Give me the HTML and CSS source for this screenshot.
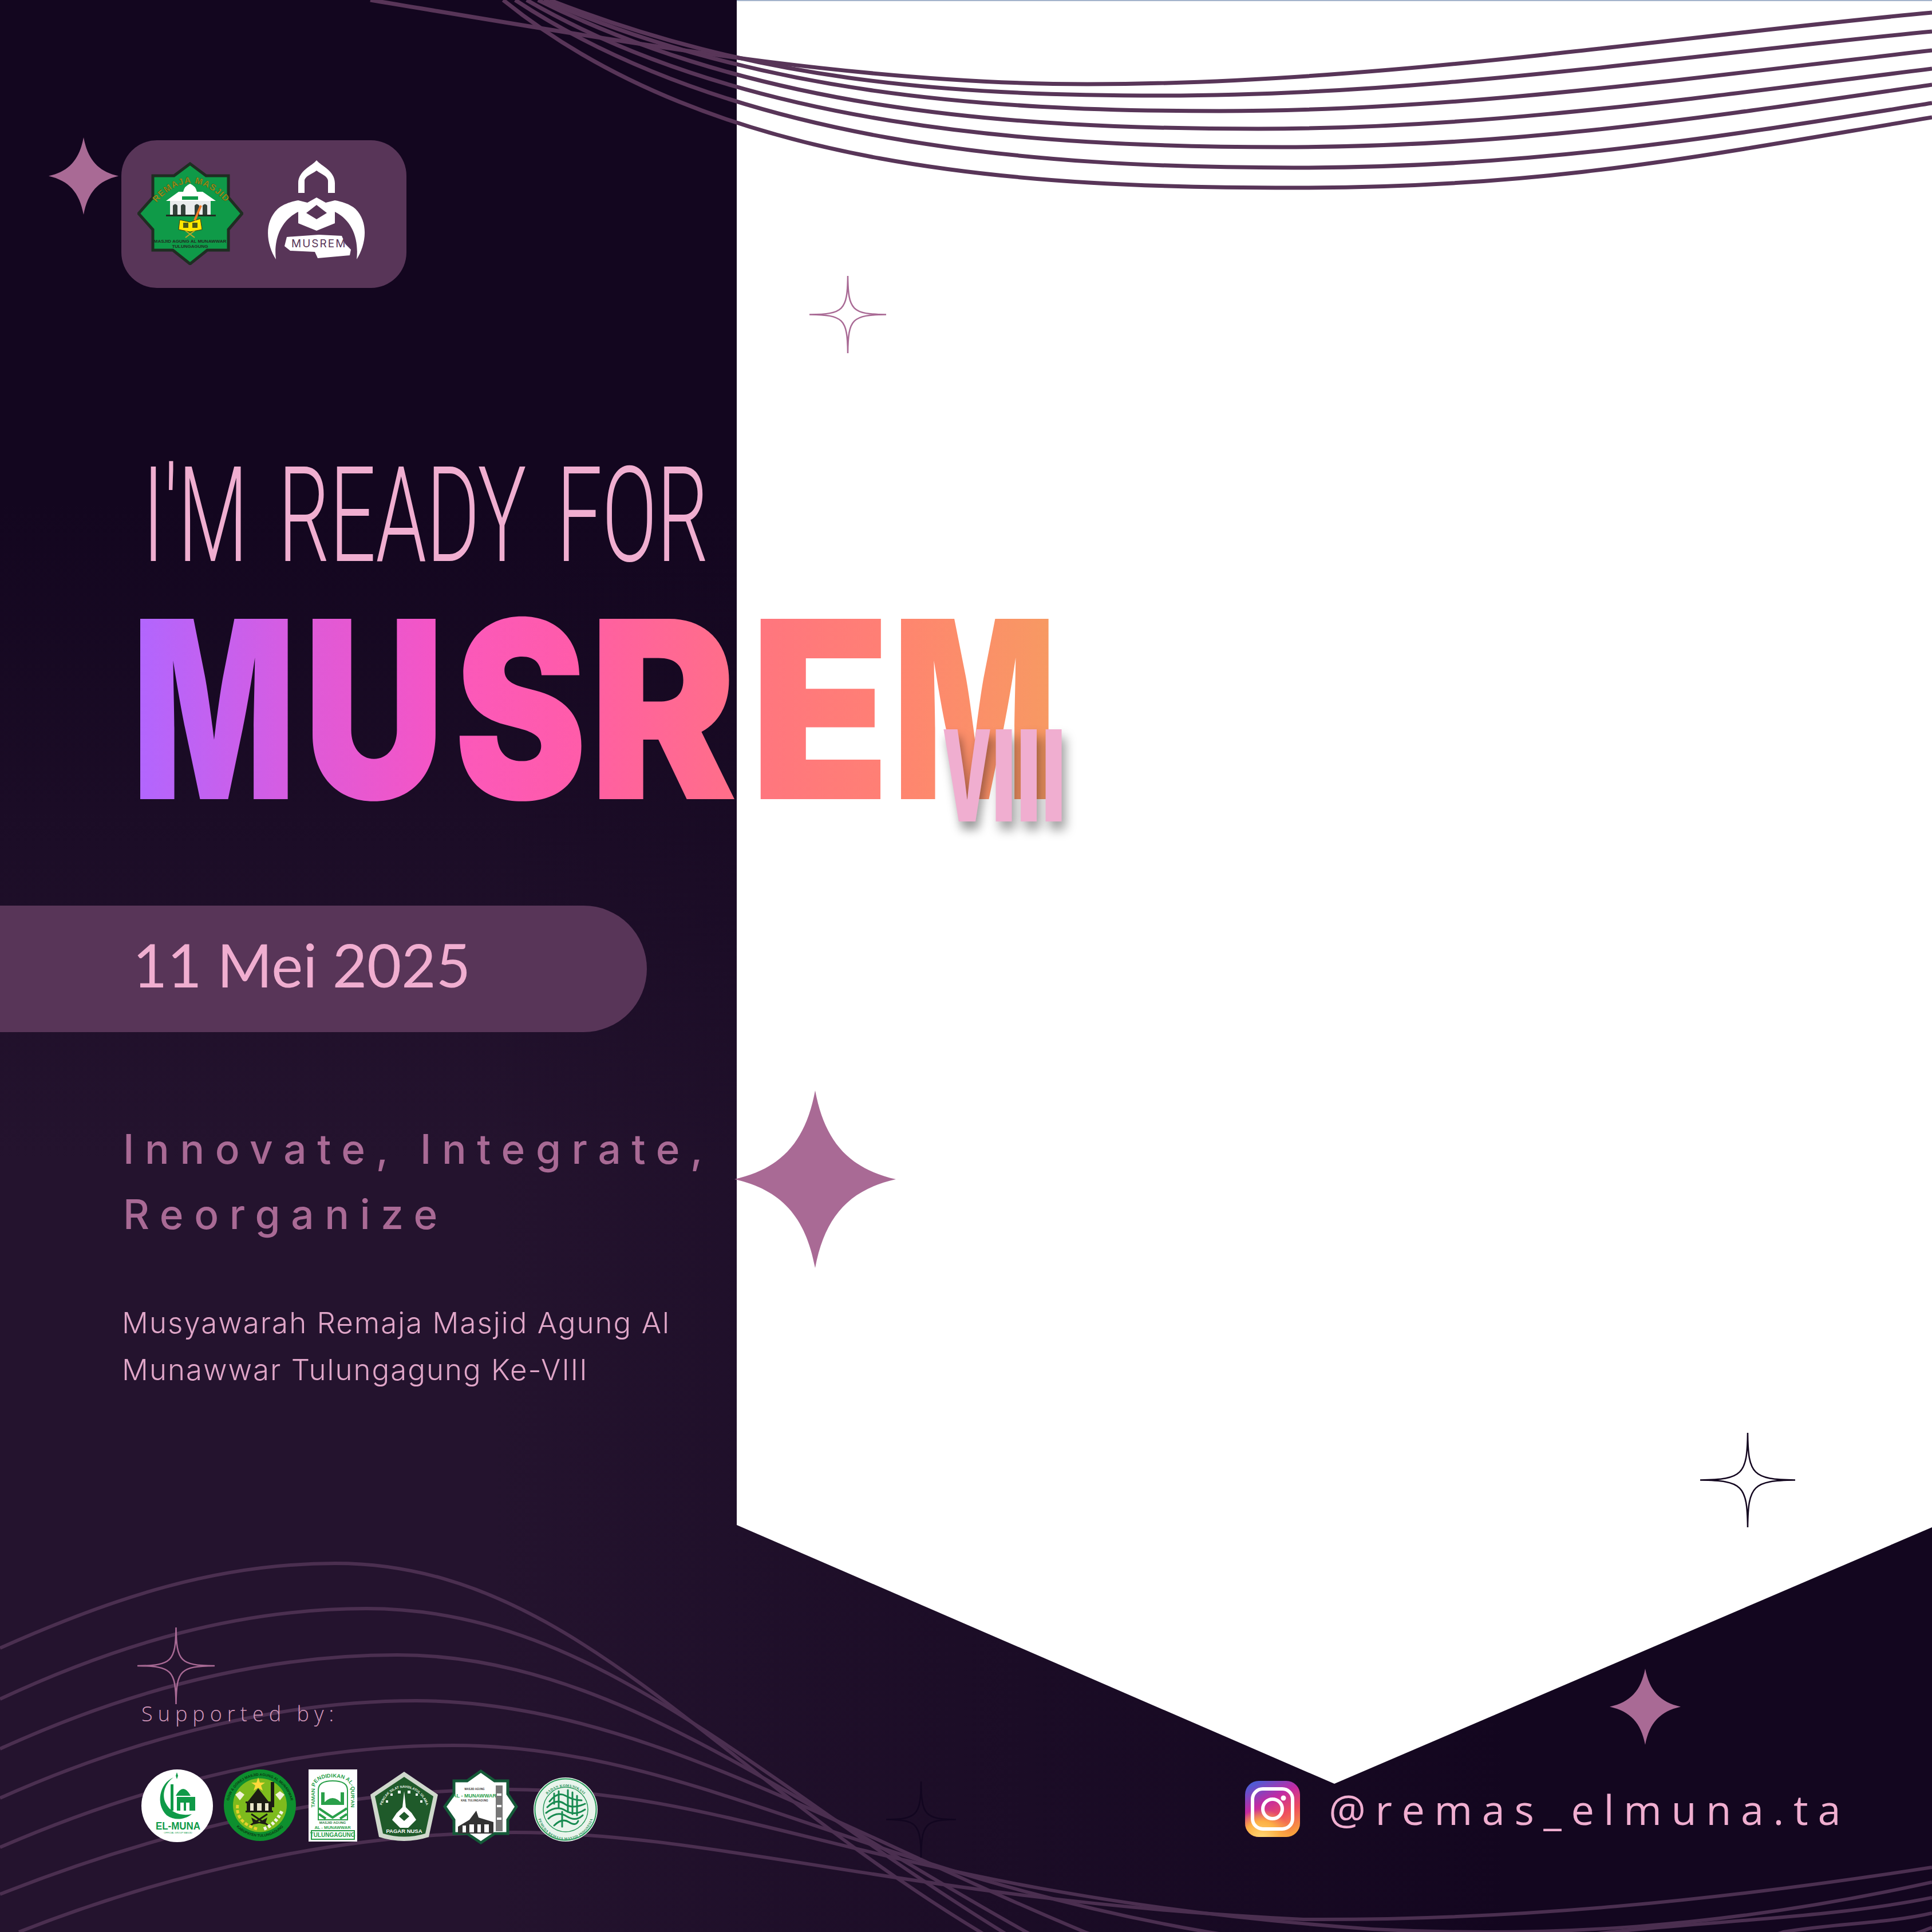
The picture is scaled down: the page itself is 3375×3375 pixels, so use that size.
FILE: index.html
```html
<!DOCTYPE html>
<html lang="id">
<head>
<meta charset="utf-8">
<title>MUSREM VIII</title>
<link rel="stylesheet" href="styles.css">
</head>
<body>
<main class="poster">
  <svg class="defs" aria-hidden="true">
    <symbol id="star-solid" viewBox="-100 -100 200 200" preserveAspectRatio="none">
      <path d="M0-100C12-42 42-12 100 0 42 12 12 42 0 100-12 42-42 12-100 0-42-12-12-42 0-100Z"/>
    </symbol>
    <symbol id="star-line" viewBox="-100 -100 200 200" preserveAspectRatio="none">
      <path vector-effect="non-scaling-stroke" d="M0-100C1-11 11-1 100 0 11 1 1 11 0 100-1 11-11 1-100 0-11-1-1-11 0-100Z"/>
    </symbol>
    <linearGradient id="ig-a" x1="0.75" y1="1" x2="0.25" y2="0">
      <stop offset="0" stop-color="#f9a03c"/><stop offset="0.35" stop-color="#ee4d5f"/>
      <stop offset="0.65" stop-color="#c32aa3"/><stop offset="1" stop-color="#4f5bd5"/>
    </linearGradient>
    <radialGradient id="ig-b" cx="0.3" cy="1.05" r="0.55">
      <stop offset="0" stop-color="#ffdd7a"/><stop offset="0.6" stop-color="#fcaf45"/><stop offset="1" stop-color="#fcaf45" stop-opacity="0"/>
    </radialGradient>
  </svg>

  <div class="panel"></div>

  <svg class="curves" viewBox="0 0 3375 3375" aria-hidden="true">
    <g class="curves-top">
      <path d="M647 0C1100 75 1500 147 1900 147 2400 147 2900 66 3375 22"/>
      <path d="M960 0C1320 140 1640 167 2029 167 2500 167 2950 95 3375 55"/>
      <path d="M950 0C1320 160 1700 194 2130 194 2550 194 2960 135 3375 88"/>
      <path d="M940 0C1320 190 1750 225 2198 225 2600 225 2970 170 3375 120"/>
      <path d="M920 0C1300 220 1800 257 2239 257 2650 257 2980 205 3375 148"/>
      <path d="M900 0C1280 250 1800 293 2260 293 2680 293 3000 240 3375 180"/>
      <path d="M879 0C1250 300 1800 328 2260 328 2700 328 2950 276 3375 205"/>
    </g>
    <g class="curves-bottom">
      <path d="M0 2879C200 2790 380 2731 586 2731 1000 2731 1250 3100 1721 3380"/>
      <path d="M0 2968C210 2870 420 2810 640 2810 1040 2810 1320 3110 1760 3380"/>
      <path d="M0 3055C230 2950 460 2891 694 2891 1060 2891 1370 3140 1793 3375 2200 3600 3000 3500 3310 3390 3335 3382 3355 3375 3375 3367"/>
      <path d="M0 3141C250 3030 500 2971 727 2971 1100 2971 1450 3190 1895 3375 2200 3480 2800 3480 3115 3375 3200 3360 3300 3360 3375 3342"/>
      <path d="M0 3227C270 3110 540 3049 792 3049 1200 3049 1500 3270 2110 3375 2400 3420 2600 3400 2815 3375 3000 3355 3200 3350 3375 3315"/>
      <path d="M0 3309C300 3190 600 3126 889 3126 1300 3126 1550 3310 2397 3370 2700 3385 3000 3370 3375 3288"/>
      <path d="M33 3375C300 3270 600 3201 900 3201 1250 3201 1600 3320 2277 3353 2650 3355 3000 3320 3375 3262"/>
    </g>
  </svg>

  <svg class="star star-solid s-logo"><use href="#star-solid"/></svg>
  <svg class="star star-solid s-big"><use href="#star-solid"/></svg>
  <svg class="star star-solid s-br"><use href="#star-solid"/></svg>
  <svg class="star star-line s-top"><use href="#star-line"/></svg>
  <svg class="star star-line s-black"><use href="#star-line"/></svg>
  <svg class="star star-line s-left"><use href="#star-line"/></svg>
  <svg class="star star-line s-faint"><use href="#star-line"/></svg>

  <div class="content">
    <header class="brand">
      <svg class="brand-star" viewBox="0 0 185 180">
        <path class="octa" d="M92 3 120 24H159V62L183 90 159 118V154H122L92 178 62 154H27V118L2 90 27 62V24H64Z"/>
        <path id="remaja-arc" fill="none" d="M36 68Q93 6 152 68"/>
        <text class="octa-arc"><textPath href="#remaja-arc" startOffset="50%" text-anchor="middle">REMAJA MASJID</textPath></text>
        <path fill="#fff" d="M50 68 72 52H80Q82 42 92 38 102 42 104 52H114L137 68Z"/>
        <path fill="#0f9a48" d="M78 60H106V66H78Z"/>
        <path fill="#e9ecec" d="M57 68H128V92H57Z"/>
        <path fill="#33413a" d="M62 92V76Q66 71 70 76V92ZM76 92V76Q80 71 84 76V92ZM100 92V76Q104 71 108 76V92ZM114 92V76Q118 71 122 76V92Z"/>
        <path fill="#1f2d22" d="M50 92H137V95H50Z"/>
        <path fill="#ffe800" stroke="#3b3b10" stroke-width="1" d="M74 101 92 105 110 99 113 118 92 122 72 118Z"/>
        <path fill="#4b5a18" d="M80 106H89V115H80ZM96 106H105V115H96Z"/>
        <path stroke="#f27a25" stroke-width="4" d="M111 76 100 102"/>
        <path stroke="#c2a727" stroke-width="2" d="M84 120 100 132M100 120 84 132"/>
        <text class="octa-small" x="92" y="141">MASJID AGUNG AL MUNAWWAR</text>
        <text class="octa-small" x="92" y="150">TULUNGAGUNG</text>
      </svg>
      <svg class="brand-musrem" viewBox="0 0 175 173">
        <path fill="#fff" d="M88 0C80 10 56 18 56 40V57H67V36C67 28 80 24 88 18 96 24 108 28 108 36V57H120V40C120 18 96 10 88 0Z"/>
        <path fill="#fff" fill-rule="evenodd" d="M17 173C2 150-6 110 20 85 30 76 45 72 56 70L72 74 88 65 104 74 120 70C131 72 146 76 156 85 181 110 173 150 158 173 162 140 152 106 120 90V110L88 123 56 110V90C24 106 13 140 17 173ZM88 78 70 92 88 103 106 92Z"/>
        <path fill="#fff" d="M36 134 92 130 132 132 138 146 148 156 146 166 90 171 85 160 42 158 32 150Z"/>
        <text class="musrem-mark" x="44" y="152">MUSREM</text>
      </svg>
    </header>

    <h2 class="ready">I'M READY FOR</h2>

    <h1 class="title">
      <span class="word">
        <span class="slot slot-m1"><span class="glyph">M</span></span>
        <span class="slot slot-u"><span class="glyph">U</span></span>
        <span class="slot slot-s"><span class="glyph">S</span></span>
        <span class="slot slot-r"><span class="glyph">R</span></span>
        <span class="slot slot-e"><span class="glyph">E</span></span>
        <span class="slot slot-m2"><span class="glyph">M</span></span>
      </span>
      <span class="edition"><span class="ed-v"><span class="ed-v-glyph">V</span></span><span class="ed-i">III</span></span>
    </h1>

    <div class="date"><span class="date-text">11 Mei 2025</span></div>

    <p class="tagline">Innovate, Integrate,<br>Reorganize</p>

    <p class="about">Musyawarah Remaja Masjid Agung Al<br>Munawwar Tulungagung Ke-VIII</p>

    <footer class="footer">
      <div class="support">
        <p class="support-label">Supported by:</p>
        <div class="emblems">
          <svg class="emblem e1" viewBox="0 0 125 127">
            <ellipse cx="62.5" cy="63.5" rx="62.5" ry="63.5" fill="#fff"/>
            <path fill="#0f9a48" d="M56 14C32 24 24 60 44 80 58 90 76 88 88 78 70 82 50 76 42 58 35 42 42 24 56 14Z"/>
            <path fill="#0f9a48" d="M62 5 64 11 62 17 60 11Z"/>
            <path fill="#0f9a48" d="M60 46Q73 22 86 46ZM51 26H56V72H51ZM62 48H94V72H62Z"/>
            <path fill="#fff" d="M68 58H74V72H68ZM78 58H84V72H78Z"/>
            <text class="e-muna" x="64" y="105" textLength="78" lengthAdjust="spacingAndGlyphs">EL-MUNA</text>
            <text class="e-muna-s" x="64" y="112">OFFICIAL GROUP MASJID</text>
          </svg>
          <svg class="emblem e2" viewBox="0 0 126 125">
            <ellipse cx="63" cy="62.5" rx="63" ry="62.5" fill="#0d8f2e"/>
            <ellipse cx="63" cy="62.5" rx="47" ry="47" fill="#7dbb1d"/>
            <path id="e2-top" fill="none" d="M8 66A55 55 0 0 1 118 66"/>
            <path id="e2-bot" fill="none" d="M11 84A57 57 0 0 0 115 84"/>
            <text class="e2-ring"><textPath href="#e2-top" startOffset="50%" text-anchor="middle">GOW &amp; GOREJ MASJID AGUNG AL MUNAWWAR</textPath></text>
            <text class="e2-ring"><textPath href="#e2-bot" startOffset="50%" text-anchor="middle">KABUPATEN TULUNGAGUNG</textPath></text>
            <path fill="#ffd93b" d="M60 14 63 23 72 23 65 28 68 37 60 32 52 37 55 28 48 23 57 23Z"/>
            <path fill="#1c1c14" d="M60 33 78 56H42Z"/>
            <path fill="#e8e4c8" d="M40 56H84V72H40Z"/>
            <path fill="#1c1c14" d="M38 56H86V59H38ZM40 59H46V73H40ZM52 59H58V73H52ZM66 59H72V73H66ZM78 59H84V73H78ZM38 72H86V75H38Z"/>
            <path fill="#1c1c14" d="M82 22H88V66H82Z"/>
            <path fill="#1c1c14" d="M48 84 62 92 76 84 72 96 62 94 52 96Z"/>
            <path stroke="#1c1c14" stroke-width="3" d="M46 98 76 78M78 98 48 78"/>
            <path fill="none" stroke="#e8d12c" stroke-width="5" stroke-dasharray="6 3" d="M24 62Q20 92 58 104"/>
            <path fill="none" stroke="#f4f4e4" stroke-width="6" stroke-dasharray="5 3" d="M70 104Q90 96 102 72"/>
            <path fill="#f3f3d8" d="M20 44 28 38 36 44 28 54ZM90 44 98 38 106 44 98 54Z"/>
          </svg>
          <svg class="emblem e3" viewBox="0 0 85 126">
            <rect width="85" height="126" fill="#fff"/>
            <path id="e3-arch" fill="none" d="M11 88V34Q11 14 42 14 74 14 74 34V88"/>
            <text class="e3-ring"><textPath href="#e3-arch" startOffset="50%" text-anchor="middle">TAMAN PENDIDIKAN AL-QUR'AN</textPath></text>
            <path fill="none" stroke="#2aa04a" stroke-width="2" d="M17 88V36Q17 20 42 20 68 20 68 36V88Z"/>
            <path fill="#2aa04a" d="M24 62Q42 38 60 62ZM22 40H28V62H22ZM56 40H62V62H56Z"/>
            <path fill="none" stroke="#2aa04a" stroke-width="4" d="M18 68 42 84 67 68M18 78 30 86M67 78 55 86"/>
            <text class="e3-s" x="42" y="95">MASJID AGUNG</text>
            <text class="e3-m" x="42" y="104">AL - MUNAWWAR</text>
            <rect x="5" y="107" width="75" height="15" fill="#fff" stroke="#2aa04a" stroke-width="2"/>
            <text class="e3-b" x="42" y="118">TULUNGAGUNG</text>
          </svg>
          <svg class="emblem e4" viewBox="0 0 118 122">
            <path fill="#cfd8cc" d="M59 0 118 40 102 114Q59 128 15 114L0 40Z"/>
            <path fill="#1f5a2a" d="M59 9 110 43 96 108Q59 119 22 108L8 43Z"/>
            <path id="e4-arc" fill="none" d="M18 74A41 46 0 0 1 100 74"/>
            <text class="e4-ring"><textPath href="#e4-arc" startOffset="50%" text-anchor="middle">PENCAK SILAT NAHDLATUL ULAMA</textPath></text>
            <path fill="#fff" d="M59 34 62 62 72 72 80 84 66 98H52L38 84 46 72 56 62Z"/>
            <path fill="#1f5a2a" d="M50 78 59 70 68 78 59 86Z"/>
            <path fill="#fff" d="M35 38h4v4h-4zM48 33h5v5h-5zM65 33h5v5h-5zM79 38h4v4h-4zM27 50h4v4h-4zM87 50h4v4h-4z"/>
            <text class="e4-t" x="59" y="107">PAGAR NUSA</text>
          </svg>
          <svg class="emblem e5" viewBox="0 0 131 131">
            <path fill="#fff" stroke="#145a38" stroke-width="5" d="M66 3 90 20H113V43L128 65 113 88V112H90L66 128 42 112H19V88L3 65 19 43V20H42Z"/>
            <text class="e5-s" x="55" y="36">MASJID AGUNG</text>
            <text class="e5-t" x="55" y="49">AL - MUNAWWAR</text>
            <text class="e5-s" x="55" y="56">KAB. TULUNGAGUNG</text>
            <path fill="#333" d="M58 72 62 84 88 92 88 112H26V100L46 88Z"/>
            <path fill="#fff" d="M34 98H40V110H34ZM46 96H54V110H46ZM60 96H66V110H60ZM72 96H80V110H72Z"/>
            <path fill="#777" d="M92 28H104V108H92Z"/>
            <path fill="#fff" d="M94 42H102V46H94ZM94 62H102V66H94ZM94 84H102V88H94Z"/>
          </svg>
          <svg class="emblem e6" viewBox="0 0 112 112">
            <circle cx="56" cy="56" r="56" fill="#e9f4ec"/>
            <circle cx="56" cy="56" r="53.5" fill="none" stroke="#2a9a5c" stroke-width="2"/>
            <circle cx="56" cy="56" r="39" fill="none" stroke="#2a9a5c" stroke-width="1.5"/>
            <path id="e6-top" fill="none" d="M12 60A44 44 0 0 1 100 60"/>
            <path id="e6-bot" fill="none" d="M7 60A49 49 0 0 0 105 60"/>
            <text class="e6-ring"><textPath href="#e6-top" startOffset="50%" text-anchor="middle">BADAN KOMUNIKASI</textPath></text>
            <text class="e6-ring"><textPath href="#e6-bot" startOffset="50%" text-anchor="middle">PEMUDA REMAJA MASJID INDONESIA</textPath></text>
            <g fill="none" stroke="#178a50" stroke-width="3" stroke-linecap="round">
              <path d="M28 42Q42 24 56 32T84 40"/>
              <path d="M24 52Q40 36 54 46T90 46"/>
              <path d="M22 62Q40 48 56 58T90 56"/>
              <path d="M26 72Q42 58 58 68T86 66"/>
              <path d="M36 84Q50 70 62 78T78 76"/>
              <path d="M36 28V46M44 24V52M60 22V60M68 26V64M76 32V66M50 60V86"/>
            </g>
          </svg>
        </div>
      </div>
      <div class="social">
        <svg class="ig" viewBox="0 0 96 98">
          <rect width="96" height="98" rx="24" fill="url(#ig-a)"/>
          <rect width="96" height="98" rx="24" fill="url(#ig-b)"/>
          <rect x="13" y="14" width="70" height="70" rx="18" fill="none" stroke="#fff" stroke-width="6"/>
          <circle cx="48" cy="49" r="17" fill="none" stroke="#fff" stroke-width="6"/>
          <circle cx="67" cy="30" r="4.5" fill="#fff"/>
        </svg>
        <span class="handle">@remas_elmuna.ta</span>
      </div>
    </footer>
  </div>
</main>
</body>
</html>
```
FILE: styles.css
```css
* { box-sizing: border-box; }
html, body { margin: 0; padding: 0; }
body { width: 3375px; height: 3375px; overflow: hidden; }

.poster {
  position: relative;
  width: 3375px;
  height: 3375px;
  overflow: hidden;
  background:
    linear-gradient(90deg, rgba(19, 6, 31, 0) 25%, #13061f 78%),
    linear-gradient(180deg, #13061f 26%, #24132e 60%);
  font-family: "Inter", "Liberation Sans", sans-serif;
}

.defs { position: absolute; width: 0; height: 0; }

.panel {
  position: absolute;
  left: 1287px;
  top: 0;
  width: 2088px;
  height: 3116px;
  background: #fff;
  border-top: 2px solid #a4b4cc;
  clip-path: polygon(0 0, 100% 0, 100% 2668px, 1044px 100%, 0 2664px);
}

.curves { position: absolute; inset: 0; width: 3375px; height: 3375px; }
.curves path { fill: none; }
.curves-top path { stroke: #583558; stroke-width: 7; }
.curves-bottom path { stroke: #4b2f50; stroke-width: 6; }

.star { position: absolute; }
.star-solid { fill: #a96a95; }
.star-line { fill: none; stroke: #a96a95; stroke-width: 2.5; }
.s-logo { left: 85px; top: 240px; width: 122px; height: 135px; }
.s-big { left: 1283px; top: 1905px; width: 282px; height: 310px; }
.s-br { left: 2812px; top: 2915px; width: 124px; height: 133px; }
.s-top { left: 1414px; top: 482px; width: 134px; height: 135px; }
.s-black { left: 2970px; top: 2503px; width: 166px; height: 165px; stroke: #13061f; }
.s-left { left: 240px; top: 2843px; width: 135px; height: 134px; }
.s-faint { left: 1548px; top: 3112px; width: 122px; height: 133px; stroke: #120620; }

.content {
  position: relative;
  display: flex;
  flex-direction: column;
  height: 3375px;
  padding-top: 245px;
}

.brand {
  display: flex;
  align-items: flex-start;
  width: 498px;
  height: 258px;
  margin-left: 212px;
  padding: 35px 0 0 28px;
  border-radius: 62px;
  background: #583558;
}
.brand-star { width: 185px; height: 180px; margin-top: 3px; flex: none; }
.brand-musrem { width: 175px; height: 173px; margin-left: 40px; flex: none; }
.octa { fill: #0f9a48; stroke: #1f2d22; stroke-width: 5; }
.octa-arc { font: 700 15.5px "Liberation Sans", sans-serif; fill: #a69a1c; stroke: #3b3b10; stroke-width: 0.4; letter-spacing: 1.2px; }
.octa-small { font: 700 8px "Liberation Sans", sans-serif; fill: #1f2d22; text-anchor: middle; }
.musrem-mark { font: 400 19px "Inter", sans-serif; fill: #583558; letter-spacing: 2px; }

.ready {
  margin: 298px 0 0 249px;
  height: 200px;
  font: 300 232px/200px "Roboto", sans-serif;
  word-spacing: 30px;
  color: #f0aed0;
  white-space: nowrap;
  transform: scaleX(0.61);
  transform-origin: left center;
}

.title {
  position: relative;
  height: 347px;
  margin: 68px 0 0 231px;
  font: 900 433px/340px "Inter", sans-serif;
}
.word { display: flex; height: 340px; }
.slot { display: block; flex: none; height: 340px; }
.glyph {
  display: inline-block;
  transform: scaleX(var(--sx));
  transform-origin: left center;
  background: linear-gradient(90deg, var(--c1), var(--c2));
  -webkit-background-clip: text;
  background-clip: text;
  color: transparent;
}
.slot-m1 { width: 299px; --sx: 0.69; --c1: #b066ff; --c2: #d85ce0; }
.slot-u  { width: 263px; --sx: 0.79; --c1: #de5ad8; --c2: #f655c4; }
.slot-s  { width: 236px; --sx: 0.806; --c1: #fb58bb; --c2: #ff5ca8; }
.slot-r  { width: 281px; --sx: 0.895; --c1: #ff5fa2; --c2: #ff6f88; }
.slot-e  { width: 250px; --sx: 0.925; --c1: #ff757f; --c2: #ff8074; }
.slot-m2 { width: 290px; --sx: 0.69; --c1: #ff8470; --c2: #f79a62; }

.edition {
  position: absolute;
  left: 1415px;
  top: 175px;
  display: flex;
  font: 900 221px/221px "Inter", sans-serif;
  color: #f0aed0;
  text-shadow: 10px 14px 24px rgba(0, 0, 0, 0.4);
}
.ed-v { display: block; flex: none; width: 87px; }
.ed-v-glyph { display: inline-block; transform: scaleX(0.49); transform-origin: left center; }
.ed-i { display: block; flex: none; letter-spacing: 3.6px; transform: scaleX(0.64); transform-origin: left center; }

.date {
  display: flex;
  align-items: center;
  width: 1130px;
  height: 221px;
  margin-top: 166px;
  padding: 0 0 16px 232px;
  border-radius: 0 111px 111px 0;
  background: #583558;
}
.date-text { font: 400 104px/1 "Lato", sans-serif; color: #f0aed0; }

.tagline {
  margin: 147px 0 0 215px;
  font-weight: 500;
  font-size: 71px;
  line-height: 114px;
  letter-spacing: 18.7px;
  color: #a96a95;
  white-space: nowrap;
}

.about {
  margin: 92px 0 0 213px;
  font-weight: 300;
  font-size: 51px;
  line-height: 82px;
  letter-spacing: 2px;
  color: #e0a6c8;
  white-space: nowrap;
}

.footer {
  display: flex;
  justify-content: space-between;
  align-items: flex-end;
  margin-top: 535px;
  padding: 0 143px 0 247px;
}
.support-label {
  margin: 0;
  font: 300 36px/50px "Open Sans", sans-serif;
  letter-spacing: 9px;
  color: #d59abd;
}
.emblems { display: flex; align-items: flex-start; margin-top: 72px; }
.emblem { flex: none; display: block; }
.e1 { width: 125px; height: 127px; }
.e2 { width: 126px; height: 125px; margin-left: 19px; }
.e3 { width: 85px; height: 126px; margin-left: 22px; }
.e4 { width: 118px; height: 122px; margin-left: 23px; margin-top: 4px; }
.e5 { width: 131px; height: 131px; margin-left: 9px; }
.e6 { width: 112px; height: 112px; margin-left: 27px; margin-top: 14px; }

.e-muna { font: 700 19px "Liberation Sans", sans-serif; fill: #0f9a48; text-anchor: middle; }
.e-muna-s { font: 400 4px "Liberation Sans", sans-serif; fill: #0f9a48; text-anchor: middle; }
.e2-ring { font: 700 6.4px "Liberation Sans", sans-serif; fill: #0a3a14; }
.e3-ring { font: 700 9.4px "Liberation Sans", sans-serif; fill: #2aa04a; }
.e3-s { font: 700 6px "Liberation Sans", sans-serif; fill: #1f7a3a; text-anchor: middle; }
.e3-m { font: 700 7.5px "Liberation Sans", sans-serif; fill: #2aa04a; text-anchor: middle; }
.e3-b { font: 700 10px "Liberation Sans", sans-serif; fill: #2aa04a; text-anchor: middle; }
.e4-ring { font: 700 6px "Liberation Sans", sans-serif; fill: #e8f0e4; }
.e4-t { font: 700 9.5px "Liberation Sans", sans-serif; fill: #fff; text-anchor: middle; }
.e5-s { font: 700 4.5px "Liberation Sans", sans-serif; fill: #333; text-anchor: middle; }
.e5-t { font: 700 9px "Liberation Sans", sans-serif; fill: #2aa04a; text-anchor: middle; }
.e6-ring { font: 700 6.2px "Liberation Serif", serif; fill: #178a50; letter-spacing: 0.4px; }

.social { display: flex; align-items: center; gap: 50px; margin-bottom: 13px; }
.ig { width: 96px; height: 98px; flex: none; display: block; }
.handle {
  font: 400 72px/1 "Open Sans", sans-serif;
  letter-spacing: 16.6px;
  color: #f0aed0;
  white-space: nowrap;
}
```
